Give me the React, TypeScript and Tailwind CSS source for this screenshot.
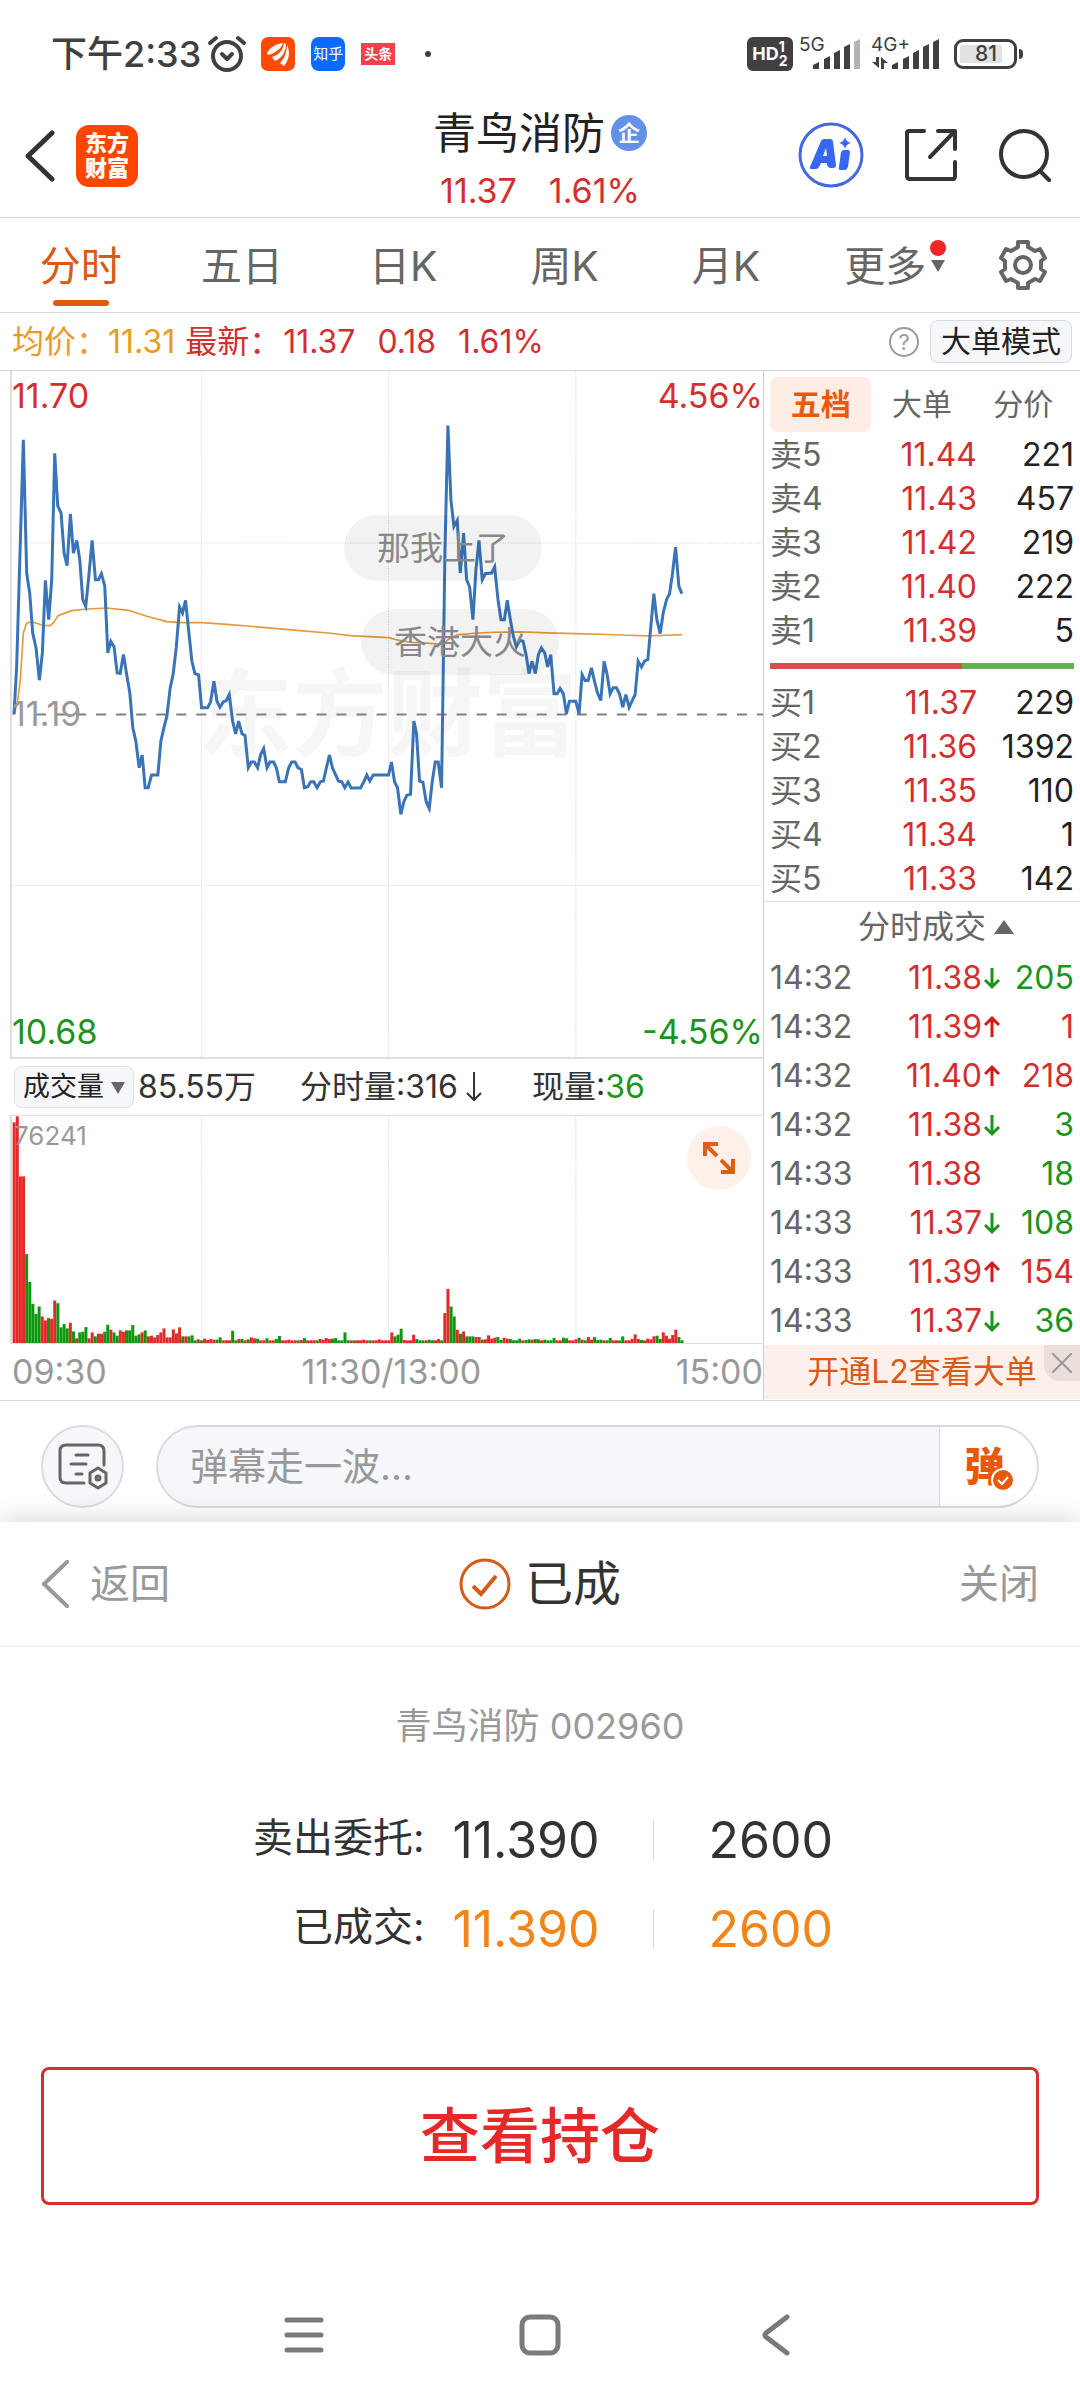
import { useState } from 'react';
import clsx from 'clsx';

// Types
interface Quote {
  label: string;
  price: string;
  volume: string;
}

interface Trade {
  time: string;
  price: string;
  dir: 'up' | 'down' | 'flat';
  side: 'buy' | 'sell';
  volume: string;
}

const sells: Quote[] = [
  { label: '卖5', price: '11.44', volume: '221' },
  { label: '卖4', price: '11.43', volume: '457' },
  { label: '卖3', price: '11.42', volume: '219' },
  { label: '卖2', price: '11.40', volume: '222' },
  { label: '卖1', price: '11.39', volume: '5' },
];

const buys: Quote[] = [
  { label: '买1', price: '11.37', volume: '229' },
  { label: '买2', price: '11.36', volume: '1392' },
  { label: '买3', price: '11.35', volume: '110' },
  { label: '买4', price: '11.34', volume: '1' },
  { label: '买5', price: '11.33', volume: '142' },
];

const trades: Trade[] = [
  { time: '14:32', price: '11.38', dir: 'down', side: 'sell', volume: '205' },
  { time: '14:32', price: '11.39', dir: 'up', side: 'buy', volume: '1' },
  { time: '14:32', price: '11.40', dir: 'up', side: 'buy', volume: '218' },
  { time: '14:32', price: '11.38', dir: 'down', side: 'sell', volume: '3' },
  { time: '14:33', price: '11.38', dir: 'flat', side: 'sell', volume: '18' },
  { time: '14:33', price: '11.37', dir: 'down', side: 'sell', volume: '108' },
  { time: '14:33', price: '11.39', dir: 'up', side: 'buy', volume: '154' },
  { time: '14:33', price: '11.37', dir: 'down', side: 'sell', volume: '36' },
];

const periods = ['分时', '五日', '日K', '周K', '月K', '更多'];
const bookTabs = ['五档', '大单', '分价'];

const priceLine = `42,1035 50,890 60,550 70,210 80,610 89,670 98,790 108,835 118,932 127,850 136,632 146,750 155,630
164,250 173,408 183,430 192,550 201,588 211,432 220,550 230,512 239,570 248,690 257,710 267,610 276,512 286,630
295,630 304,612 314,650 323,850 332,815 342,832 351,910 360,912 370,855 379,912 389,970 398,1075 407,1115 417,1195
426,1157 435,1255 444,1255 454,1217 473,1217 482,1115 491,1075 500,1040 510,955 519,912 528,835 538,712 547,730
556,692 566,790 575,875 584,912 595,916 604,1015 622,1015 631,997 641,935 650,995 659,1013 669,997 678,993 687,975
697,1055 706,1093 715,1055 725,1093 734,1098 744,1195 753,1178 762,1178 772,1195 781,1155 790,1137 800,1195 809,1178
820,1178 828,1195 837,1237 855,1237 865,1195 874,1178 884,1178 893,1195 903,1200 912,1255 922,1252 931,1237 940,1237
950,1255 960,1237 969,1235 978,1195 987,1157 996,1195 1005,1215 1014,1235 1024,1237 1033,1255 1043,1238 1052,1256
1080,1256 1090,1237 1099,1217 1108,1235 1118,1217 1164,1217 1173,1178 1182,1237 1191,1255 1201,1335 1210,1297
1219,1278 1230,1275 1240,1055 1248,1093 1257,1235 1267,1238 1277,1297 1286,1317 1295,1237 1304,1178 1313,1178
1323,1255 1333,550 1342,167 1351,390 1360,470 1370,452 1379,610 1389,490 1398,630 1407,652 1417,750 1426,600
1435,512 1445,630 1454,612 1473,610 1482,592 1492,690 1501,750 1511,750 1520,692 1529,750 1538,800 1547,832
1557,812 1567,815 1576,855 1585,912 1594,875 1604,912 1613,855 1622,835 1632,850 1641,892 1650,855 1660,973
1669,973 1678,957 1688,973 1697,1033 1706,995 1725,995 1735,1033 1744,915 1753,933 1762,933 1772,895 1781,935
1790,970 1800,993 1810,875 1819,915 1828,973 1837,955 1847,955 1856,973 1866,1013 1875,975 1885,1013 1894,993
1903,975 1912,875 1922,892 1931,875 1941,870 1950,770 1959,672 1968,750 1978,792 1987,730 1997,690 2006,672
2015,610 2024,532 2034,650 2043,672`;

const averageLine = `42,1035 52,1000 61,930 70,790 80,760 95,757 110,761 127,767 150,768 160,760 174,738 215,723
260,718 320,715 385,722 440,740 500,756 540,759 604,759 680,764 740,769 830,777 900,783 990,791 1050,798 1164,804
1190,811 1230,818 1300,822 1330,823 1345,808 1370,796 1420,791 1480,788 1560,787 1640,790 1720,792 1800,794
1880,797 1940,799 2000,797 2043,795`;

// One entry per minute: r = up, g = down
const volumeBars = `r665 r683 r502 r502 g268 g184 g118 g88 g110 r80 r68 g75 r73 r128 g120 g47 g57 g44 r61 g35
r14 g32 g34 g48 r14 r32 g20 r28 r28 g34 g55 r40 g32 g22 r38 r34 g38 g38 g54 g22 g26 r32 g38 r20 r22 r17 r24 r32 r44
r17 r17 r41 r29 r47 g20 r20 g20 g23 g8 r11 g8 r13 r9 r12 r10 g10 g17 r8 r8 r8 g37 g8 r12 g12 r8 g11 r17 r14 g13 r8
r8 g14 r8 r8 g12 g21 r8 r8 r10 r8 r8 g8 r9 g15 r8 r8 r8 g8 r12 r10 r15 r12 g13 g15 g8 g8 g32 g8 r8 g8 r8 r8 r10 r8
g8 r8 r8 r11 r8 r8 r8 r32 g20 g25 g43 r9 r8 r8 r25 g12 g8 g8 r8 g10 g8 r8 r12 g8 r90 r163 g110 g80 r40 g28 r35 g20
g20 g20 r18 r18 g10 r11 r23 r13 r16 g18 g9 r16 r13 g12 g8 g8 g13 r8 g9 g11 r10 g12 g11 r8 g10 g8 g8 g15 r8 r8 g16
g14 r8 r8 r11 g16 r10 g8 r18 r10 g18 g9 g10 r8 g8 g15 r8 r8 g8 g20 r8 r8 r12 r26 r12 g9 r8 r13 r11 r20 g22 g12 r32
r22 r13 r24 r40 g18 g8`
  .split(/\s+/)
  .map(bar => ({ up: bar[0] === 'r', height: Number(bar.slice(1)) }));

function SignalBars({ faded }: { faded?: boolean }) {
  return (
    <svg className="w-12 h-[30px]" viewBox="0 0 48 30" fill="#404040" aria-hidden="true">
      <path d="M0 30v-4l6-3v7z" />
      <path d="M11 30V20l6-3v13z" />
      <path d="M21 30V14l6-3v19z" />
      <path d="M31 30V8l6-3v25z" />
      <path d="M41 30V3l6-3v30z" fill={faded ? '#b3b3b3' : '#404040'} />
    </svg>
  );
}

function StatusBar() {
  return (
    <div className="flex items-center justify-between pl-[51px] pr-[57px] py-9 text-[#404040]">
      <div className="flex items-center h-9">
        <span className="text-4xl leading-9 font-medium">下午2:33</span>
        <svg className="ml-1.5 w-10 h-10" viewBox="0 0 40 40" fill="none" stroke="#404040" strokeWidth="4" strokeLinecap="round" aria-hidden="true">
          <circle cx="20" cy="22" r="14" />
          <path d="M3 9l6-5M37 9l-6-5M15 20l5 5 5-5" strokeLinejoin="round" />
        </svg>
        <svg className="ml-3.5 w-[34px] h-[34px]" viewBox="0 0 34 34" aria-hidden="true">
          <rect width="34" height="34" rx="7" fill="#ff4a00" />
          <path d="M6 16C9 10 15 7 22 6c-2 6-8 10-15 12zM11 20c7-2 11-7 12-14l2 1c0 8-4 14-11 17zM19 26c4-4 7-11 7-18 3 6 3 14-3 21z" fill="#fff" />
        </svg>
        <span className="ml-4 w-[34px] h-[34px] rounded-lg bg-[#0a6cff] text-white text-[15px] leading-[34px] text-center">知乎</span>
        <span className="ml-4 w-[34px] bg-[#f0424a] text-white text-[14px] leading-[22px] font-bold text-center">头条</span>
        <span className="ml-[30px] w-1.5 h-1.5 rounded-full bg-[#404040]"></span>
      </div>
      <div className="flex items-center h-9">
        <div className="flex items-center justify-center w-[46px] h-[34px] rounded-md bg-[#404040] text-white font-bold">
          <span className="text-[18px] leading-5">HD</span>
          <span className="flex flex-col text-[14px] leading-[14px]">
            <span>1</span>
            <span>2</span>
          </span>
        </div>
        <div className="relative ml-5">
          <span className="absolute -left-3.5 -top-1 text-[19px] leading-5">5G</span>
          <SignalBars faded />
        </div>
        <div className="relative ml-[31px]">
          <span className="absolute -left-[21px] -top-1 text-[19px] leading-5">4G+</span>
          <svg className="absolute -left-5 bottom-0 w-4 h-3" viewBox="0 0 16 12" fill="#404040" aria-hidden="true">
            <path d="M4 0h3v11L0 5h4zM9 12V0l7 6h-4v6z" />
          </svg>
          <SignalBars />
        </div>
        <div className="flex items-center ml-3.5">
          <span className="w-[63px] h-[30px] p-[3px] rounded-[9px] border-3 border-[#404040]">
            <span className="block w-[42px] bg-[#e2e2e2] rounded-xs text-center text-[21px] leading-[18px] pl-2.5 font-medium">81</span>
          </span>
          <span className="ml-0.5 w-1 h-2.5 rounded-r bg-[#404040]"></span>
        </div>
      </div>
    </div>
  );
}

function Header() {
  return (
    <header className="grid grid-cols-[1fr_auto_1fr] items-start pb-px border-b border-[#d6d6d6]">
      <div className="flex items-center gap-5 pt-[17px] pl-6">
        <button aria-label="后退">
          <svg className="w-8 h-[52px]" viewBox="0 0 32 52" fill="none" stroke="#333" strokeWidth="5" strokeLinecap="round" strokeLinejoin="round">
            <path d="M28 3L4 26l24 23" />
          </svg>
        </button>
        <a href="#home" className="w-[62px] py-1.5 rounded-[13px] bg-[#ff4600] text-white text-[22px] leading-[25px] font-black text-center">
          东方<br />财富
        </a>
      </div>
      <div className="flex flex-col items-center">
        <h1 className="flex items-center gap-1.5 text-[43px] leading-[50px] text-[#222]">
          青鸟消防
          <span className="w-9 h-9 rounded-full bg-[#6590e8] text-white text-[22px] leading-9 font-bold text-center">企</span>
        </h1>
        <p className="flex gap-8 mt-2 text-[34px] leading-[50px] text-[#d32f2f]">
          <span>11.37</span>
          <span>1.61%</span>
        </p>
      </div>
      <div className="flex items-center justify-end gap-10 pt-3.5 pr-7">
        <button aria-label="智能助手">
          <svg className="w-[66px] h-[66px]" viewBox="0 0 66 66" fill="#3a66f5">
            <circle cx="33" cy="33" r="31" fill="none" stroke="#4468e0" strokeWidth="3" />
            <path fillRule="evenodd" d="M12 45l11-26q1-2 3-2h6q3 0 3 3l3 23q0 3-3 3h-3q-2 0-3-3v-2h-6l-2 4q-1 2-3 2h-4q-3 0-2-2zM25 34h4l-1-8z" />
            <path d="M43 30q1-2 3-2h4q2 0 2 2l-2 15q-1 3-3 3h-4q-3 0-2-3z" />
            <path d="M47 15q1 5 6 6-5 1-6 6-1-5-6-6 5-1 6-6z" />
          </svg>
        </button>
        <button aria-label="分享">
          <svg className="w-[54px] h-[54px]" viewBox="0 0 54 54" fill="none" stroke="#333" strokeWidth="4" strokeLinecap="round" strokeLinejoin="round">
            <path d="M20 3H5q-2 0-2 2v43q0 3 3 3h43q2 0 2-3V34" />
            <path d="M34 3h17v18M51 3L26 29" />
          </svg>
        </button>
        <button aria-label="搜索">
          <svg className="w-[54px] h-[54px]" viewBox="0 0 54 54" fill="none" stroke="#333" strokeWidth="4" strokeLinecap="round">
            <circle cx="26" cy="26" r="23" />
            <path d="M42 43l9 9" />
          </svg>
        </button>
      </div>
    </header>
  );
}

function PeriodTabs() {
  const [active, setActive] = useState('分时');

  return (
    <nav className="flex items-center border-b border-[#d6d6d6]">
      {periods.map(period => (
        <button
          key={period}
          onClick={() => setActive(period)}
          className={clsx('flex-1 flex flex-col items-center pt-[18px] pb-1.5 text-[41px] leading-[60px]', active === period ? 'text-[#d85a14]' : 'text-[#666]')}
        >
          <span className={clsx('relative', period === '更多' && 'mr-1')}>
            {period}
            {period === '更多' && (
              <>
                <span className="absolute -right-5 top-1 w-4 h-4 rounded-full bg-[#f02525]"></span>
                <svg className="absolute -right-5 top-6 w-4 h-3" viewBox="0 0 16 12" fill="#666" aria-hidden="true">
                  <path d="M1 0h14L8 12z" />
                </svg>
              </>
            )}
          </span>
          <span className={clsx('mt-1 w-14 h-1.5 rounded-full', active === period && 'bg-[#e05a10]')}></span>
        </button>
      ))}
      <button aria-label="设置" className="flex justify-center w-28 pr-0.5">
        <svg className="w-12 h-[50px]" viewBox="0 0 48 50" fill="none" stroke="#666" strokeWidth="4" strokeLinejoin="round">
          <path d="M19 2h10v5l7 4 5-2 5 9-4 3v8l4 3-5 9-5-2-7 4v5H19v-5l-7-4-5 2-5-9 4-3v-8l-4-3 5-9 5 2 7-4z" />
          <circle cx="24" cy="25" r="8" />
        </svg>
      </button>
    </nav>
  );
}

function PriceSummary() {
  return (
    <div className="flex items-center justify-between py-[7px] pl-3 pr-2 border-b border-[#d6d6d6]">
      <p className="flex text-[32px] leading-[43px] text-[#d32f2f]">
        <span className="text-[#eb9a25]">均价：11.31</span>
        <span className="ml-2.5">最新：</span>
        <span className="ml-0.5">11.37</span>
        <span className="ml-[22px]">0.18</span>
        <span className="ml-[22px]">1.61%</span>
      </p>
      <div className="flex items-center gap-[11px]">
        <button aria-label="说明" className="w-[30px] h-[30px] rounded-full border-2 border-[#999] text-[#999] text-[22px] leading-[26px]">?</button>
        <button className="px-2.5 rounded-lg border border-[#d9dbdf] bg-[#f6f7fa] text-[#222] text-[30px] leading-[41px]">大单模式</button>
      </div>
    </div>
  );
}

function PriceChart() {
  return (
    <div className="relative h-[688px] border-l-2 border-b-2 border-[#dedede]">
      <div className="absolute inset-0 flex items-center justify-center text-[95px] leading-none font-bold text-[#f6f6f6]">东方财富</div>
      <svg className="absolute inset-0 w-full h-full" viewBox="36 3 2250 2061" preserveAspectRatio="none" fill="none" aria-hidden="true">
        <path d="M604 3v2061M1164 3v2061M1725 3v2061M33 520h2253M33 1549h2253" stroke="#ddd" strokeWidth="3" strokeDasharray="4 4" />
        <path d="M108 1035h2178" stroke="#808080" strokeWidth="6" strokeDasharray="30 30" />
        <polyline points={averageLine} stroke="#e39a3b" strokeWidth="5" strokeLinejoin="round" />
        <polyline points={priceLine} stroke="#3a74b8" strokeWidth="9" />
      </svg>
      <div className="absolute inset-0 flex flex-col justify-between text-[34px] leading-[50px]">
        <div className="flex justify-between text-[#d32f2f]">
          <span>11.70</span>
          <span>4.56%</span>
        </div>
        <span className="text-[#999]">11.19</span>
        <div className="flex justify-between text-[#1a941a]">
          <span>10.68</span>
          <span>-4.56%</span>
        </div>
      </div>
      <span className="absolute left-[332px] top-36 px-[33px] rounded-full bg-black/5 text-[#888] text-[33px] leading-[66px]">那我上了</span>
      <span className="absolute left-[349px] top-[238px] px-[33px] rounded-full bg-black/5 text-[#888] text-[33px] leading-[66px]">香港大火</span>
    </div>
  );
}

function VolumeChart() {
  return (
    <div className="relative h-[229px] border-l-2 border-y border-[#dedede]">
      <svg className="absolute inset-0 w-full h-full" viewBox="36 348 2250 684" preserveAspectRatio="none" aria-hidden="true">
        <path d="M604 348v684M1164 348v684M1725 348v684" fill="none" stroke="#ddd" strokeWidth="3" strokeDasharray="4 4" />
        {volumeBars.map((bar, i) => (
          <rect key={i} x={38 + i * 9.35} y={1032 - bar.height} width="9" height={bar.height} fill={bar.up ? '#e32a2a' : '#0f960f'} />
        ))}
      </svg>
      <span className="absolute left-0.5 top-0 text-[26px] leading-10 text-[#999]">76241</span>
      <button aria-label="全屏" className="absolute right-3 top-2.5 flex items-center justify-center w-16 h-16 rounded-full bg-[#fff1ea]">
        <svg className="w-8 h-8" viewBox="0 0 32 32" fill="none" stroke="#dd5e18" strokeWidth="4">
          <path d="M2 14V2h13M2 2l12 12M18 30h12V17M30 30L18 18" />
        </svg>
      </button>
    </div>
  );
}

function ChartColumn() {
  return (
    <section className="pl-2.5 border-r border-[#d0d0d0]">
      <PriceChart />
      <div className="flex items-center h-14 text-[32px] leading-10 text-[#333]">
        <label className="relative ml-1 rounded-lg border border-[#e0e2e6] bg-[#f6f7fa]">
          <select aria-label="指标" className="block appearance-none w-[118px] pl-2 text-[27px] leading-10 text-[#222]">
            <option>成交量</option>
          </select>
          <svg className="absolute right-2 top-[15px] w-3.5 h-3" viewBox="0 0 14 12" fill="#666" aria-hidden="true">
            <path d="M0 0h14L7 12z" />
          </svg>
        </label>
        <span className="ml-1">85.55万</span>
        <span className="flex items-center ml-11">
          分时量:316
          <svg className="ml-2 w-4 h-[30px]" viewBox="0 0 16 30" fill="none" stroke="#333" strokeWidth="2" aria-hidden="true">
            <path d="M8 0v28M1 21l7 7 7-7" />
          </svg>
        </span>
        <span className="ml-[50px]">
          现量:<span className="text-[#1a941a]">36</span>
        </span>
      </div>
      <VolumeChart />
      <div className="flex justify-between pl-0.5 text-[34px] leading-[56px] text-[#999]">
        <span>09:30</span>
        <span>11:30/13:00</span>
        <span>15:00</span>
      </div>
    </section>
  );
}

function QuoteTable({ quotes, label }: { quotes: Quote[]; label: string }) {
  return (
    <table aria-label={label} className="w-full text-[32px] leading-[44px]">
      <tbody>
        {quotes.map(quote => (
          <tr key={quote.label}>
            <th scope="row" className="font-normal text-left text-[#666]">{quote.label}</th>
            <td className="w-[100px] text-right text-[#d32f2f]">{quote.price}</td>
            <td className="w-[97px] text-right text-[#222]">{quote.volume}</td>
          </tr>
        ))}
      </tbody>
    </table>
  );
}

function TradeArrow({ dir }: { dir: Trade['dir'] }) {
  if (dir === 'flat') return null;
  return (
    <svg className="mx-auto w-4 h-6" viewBox="0 0 16 24" fill="none" stroke={dir === 'up' ? '#d31818' : '#1a941a'} strokeWidth="3" aria-hidden="true">
      <path d={dir === 'up' ? 'M8 22V3M1 10l7-7 7 7' : 'M8 2v19M1 14l7 7 7-7'} />
    </svg>
  );
}

function OrderBook() {
  const [tab, setTab] = useState('五档');
  const [showPromo, setShowPromo] = useState(true);

  return (
    <section>
      <div className="px-1.5">
        <div className="grid grid-cols-3 pt-1.5 pb-px">
          {bookTabs.map(name => (
            <button
              key={name}
              onClick={() => setTab(name)}
              className={clsx('rounded-lg text-[30px] leading-[55px]', tab === name ? 'bg-[#feede5] text-[#ea5a0c] font-bold' : 'text-[#666]')}
            >
              {name}
            </button>
          ))}
        </div>
        <QuoteTable quotes={sells} label="卖盘" />
        <div className="flex mt-2.5 mb-3">
          <span className="grow-[63] h-1.5 bg-[#d84c4c]"></span>
          <span className="grow-[37] h-1.5 bg-[#62b34f]"></span>
        </div>
        <QuoteTable quotes={buys} label="买盘" />
      </div>
      <button className="flex items-center justify-center gap-2 w-full pl-7 border-t border-[#e4e4e4] text-[32px] leading-[50px] text-[#666]">
        分时成交
        <svg className="w-5 h-3.5" viewBox="0 0 20 14" fill="#666" aria-hidden="true">
          <path d="M10 0l10 14H0z" />
        </svg>
      </button>
      <div className="px-1.5 pt-px">
        <table aria-label="分时成交" className="w-full text-[32px] leading-[49px]">
          <tbody>
            {trades.map((trade, i) => (
              <tr key={i}>
                <td className="text-[#666]">{trade.time}</td>
                <td className="w-24 text-right text-[#d32f2f]">{trade.price}</td>
                <td className="w-5"><TradeArrow dir={trade.dir} /></td>
                <td className={clsx('w-[72px] text-right', trade.side === 'buy' ? 'text-[#d32f2f]' : 'text-[#1a941a]')}>{trade.volume}</td>
              </tr>
            ))}
          </tbody>
        </table>
      </div>
      {showPromo && (
        <div className="relative bg-[#fdf0ea] text-center">
          <a href="#l2" className="text-[32px] leading-[54px] text-[#d85a14]">开通L2查看大单</a>
          <button aria-label="关闭广告" onClick={() => setShowPromo(false)} className="absolute right-0 top-0 w-9 h-9 p-2 rounded-bl-2xl bg-[#ecdfda]">
            <svg className="w-full h-full" viewBox="0 0 20 20" stroke="#999" strokeWidth="2">
              <path d="M0 0l20 20M20 0L0 20" />
            </svg>
          </button>
        </div>
      )}
    </section>
  );
}

function CommentBar() {
  return (
    <form className="flex items-center gap-8 px-[41px] pt-6 pb-3.5 border-t border-[#d6d6d6]" onSubmit={e => e.preventDefault()}>
      <button type="button" aria-label="弹幕设置" className="flex items-center justify-center w-[83px] h-[83px] rounded-full border-2 border-[#dadcdf] bg-[#f6f7fa]">
        <svg className="w-[50px] h-[48px]" viewBox="0 0 50 48" fill="none" stroke="#666" strokeWidth="3" strokeLinecap="round">
          <path d="M46 22V8q0-6-6-6H8Q2 2 2 8v26q0 6 6 6h18M18 12h12M13 21h15M18 31h6" />
          <path d="M40 25l8 5v10l-8 5-8-5V30z" strokeLinejoin="round" />
          <circle cx="40" cy="35" r="2" />
        </svg>
      </button>
      <div className="flex flex-1 rounded-full border-2 border-[#d8dadd] bg-[#f6f7fa] overflow-hidden">
        <input aria-label="弹幕" placeholder="弹幕走一波..." className="flex-1 min-w-0 pl-8 text-[38px] leading-[79px] h-[79px] placeholder:text-[#999]" />
        <button aria-label="发送弹幕" className="relative w-[98px] pr-2 border-l border-[#d8dadd] bg-white text-[#e5590c] text-[40px] leading-[74px] font-black">
          弹
          <svg className="absolute right-[22px] bottom-3.5 w-6 h-6" viewBox="0 0 24 24" fill="none" aria-hidden="true">
            <circle cx="12" cy="12" r="11" fill="#e5590c" stroke="#fff" strokeWidth="2" />
            <path d="M7 12l4 4 6-7" stroke="#fff" strokeWidth="2" />
          </svg>
        </button>
      </div>
    </form>
  );
}

function OrderRow({ label, price, amount, filled }: { label: string; price: string; amount: string; filled?: boolean }) {
  return (
    <div className="grid grid-cols-[393fr_213fr_394fr] items-center text-[50px] leading-[60px]">
      <dt className="text-right text-[40px] text-[#333]">{label}:</dt>
      <dd className={clsx('flex items-center justify-between pt-1 pl-7', filled ? 'text-[#f08519]' : 'text-[#333]')}>
        {price}
        <span className="w-px h-10 bg-[#ddd]"></span>
      </dd>
      <dd className={clsx('pt-1 pl-[54px]', filled ? 'text-[#f08519]' : 'text-[#333]')}>{amount}</dd>
    </div>
  );
}

function ResultSheet() {
  return (
    <section>
      <div className="grid grid-cols-[1fr_auto_1fr] items-center px-[41px] py-8 border-b border-[#ececec] text-[40px] leading-[60px] text-[#999]">
        <button className="flex items-center gap-5 justify-self-start">
          <svg className="w-[29px] h-12" viewBox="0 0 29 48" fill="none" stroke="#999" strokeWidth="4" strokeLinecap="round" strokeLinejoin="round" aria-hidden="true">
            <path d="M26 2L3 24l23 22" />
          </svg>
          返回
        </button>
        <h2 className="flex items-center gap-3.5 text-[48px] text-[#333]">
          <svg className="w-[52px] h-[52px]" viewBox="0 0 52 52" fill="none" stroke="#d85a14" strokeWidth="3" aria-hidden="true">
            <circle cx="26" cy="26" r="24" />
            <path d="M14 28l8 8 15-18" strokeWidth="4" />
          </svg>
          已成
        </h2>
        <button className="justify-self-end">关闭</button>
      </div>
      <p className="mt-[54px] text-center text-[36px] leading-[50px] text-[#999]">青鸟消防 002960</p>
      <dl className="flex flex-col gap-[25px] mt-[55px]">
        <OrderRow label="卖出委托" price="11.390" amount="2600" />
        <OrderRow label="已成交" price="11.390" amount="2600" filled />
      </dl>
      <div className="px-[41px] mt-[108px]">
        <button className="w-full rounded-lg border-3 border-[#d32f2f] text-[60px] leading-[132px] font-medium text-[#e62828]">查看持仓</button>
      </div>
    </section>
  );
}

function SystemNav() {
  return (
    <nav className="flex justify-center gap-[194px] pt-[109px] pb-[46px]">
      <button aria-label="最近任务">
        <svg className="w-[42px] h-[42px]" viewBox="0 0 42 42" stroke="#7a7a7a" strokeWidth="5" strokeLinecap="round">
          <path d="M4 6h34M4 21h34M4 36h34" />
        </svg>
      </button>
      <button aria-label="主屏幕">
        <svg className="w-[42px] h-[42px]" viewBox="0 0 42 42" fill="none" stroke="#7a7a7a" strokeWidth="5">
          <rect x="3" y="3" width="36" height="36" rx="8" />
        </svg>
      </button>
      <button aria-label="返回上一页">
        <svg className="w-[42px] h-[42px]" viewBox="0 0 42 42" fill="none" stroke="#7a7a7a" strokeWidth="5" strokeLinecap="round" strokeLinejoin="round">
          <path d="M32 3L11 19q-2 2 0 4l21 16" />
        </svg>
      </button>
    </nav>
  );
}

export default function App() {
  return (
    <div className="flex flex-col min-h-screen overflow-hidden bg-white font-['Inter','Noto_Sans_CJK_SC',sans-serif]">
      <StatusBar />
      <Header />
      <PeriodTabs />
      <PriceSummary />
      <main className="grid grid-cols-[minmax(0,1fr)_316px]">
        <ChartColumn />
        <OrderBook />
      </main>
      <CommentBar />
      <div className="relative flex-1 bg-white shadow-[0_-4px_24px_rgba(0,0,0,0.15)]">
        <ResultSheet />
        <SystemNav />
      </div>
    </div>
  );
}
